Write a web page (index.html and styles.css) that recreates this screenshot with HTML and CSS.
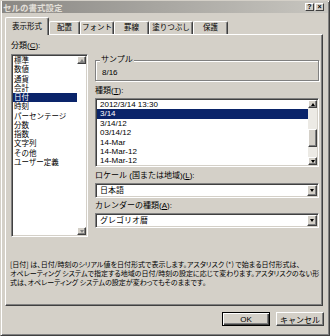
FILE: index.html
```html
<!DOCTYPE html>
<html lang="ja">

<head>
  <meta charset="UTF-8">
  <meta name="viewport" content="width=device-width, initial-scale=1.0">
  <title>セルの書式設定</title>
  <link rel="stylesheet" href="styles.css">
</head>

<body>
  <div class="window">
    <div class="titlebar">
      <span class="title">セルの書式設定</span>
      <div class="caption-buttons">
        <span class="caption-btn">?</span>
        <span class="caption-btn">×</span>
      </div>
    </div>

    <div class="tabs">
      <div class="tab active w1">表示形式</div>
      <div class="tab w2">配置</div>
      <div class="tab w3">フォント</div>
      <div class="tab w4">罫線</div>
      <div class="tab w5">塗りつぶし</div>
      <div class="tab w6">保護</div>
    </div>

    <div class="panel">
      <div class="cols">
        <div class="col-left">
          <div class="label">分類(<u>C</u>):</div>
          <div class="listbox category">
            <div class="items">
              <div class="item">標準</div>
              <div class="item">数値</div>
              <div class="item">通貨</div>
              <div class="item">会計</div>
              <div class="item selected">日付</div>
              <div class="item">時刻</div>
              <div class="item">パーセンテージ</div>
              <div class="item">分数</div>
              <div class="item">指数</div>
              <div class="item">文字列</div>
              <div class="item">その他</div>
              <div class="item">ユーザー定義</div>
            </div>
            <div class="vscroll flat">
              <span class="sbtn"><span class="arrow up disabled"></span></span>
              <span class="sbtn"><span class="arrow down disabled"></span></span>
            </div>
          </div>
        </div>

        <div class="col-right">
          <div class="group">
            <div class="group-title">サンプル</div>
            <div class="group-value">8/16</div>
          </div>

          <div class="label gap-5">種類(<u>T</u>):</div>
          <div class="listbox types">
            <div class="items">
              <div class="item">2012/3/14 13:30</div>
              <div class="item selected">3/14</div>
              <div class="item">3/14/12</div>
              <div class="item">03/14/12</div>
              <div class="item">14-Mar</div>
              <div class="item">14-Mar-12</div>
              <div class="item">14-Mar-12</div>
            </div>
            <div class="vscroll track">
              <span class="sbtn"><span class="arrow up"></span></span>
              <span class="thumb"></span>
              <span class="sbtn"><span class="arrow down"></span></span>
            </div>
          </div>

          <div class="label gap-4">ロケール (国または地域)(<u>L</u>):</div>
          <div class="combo">
            <span class="combo-value">日本語</span>
            <span class="sbtn combo-btn"><span class="arrow down"></span></span>
          </div>

          <div class="label gap-3">カレンダーの種類(<u>A</u>):</div>
          <div class="combo">
            <span class="combo-value">グレゴリオ暦</span>
            <span class="sbtn combo-btn"><span class="arrow down"></span></span>
          </div>
        </div>
      </div>

      <p class="desc">[日付] は、日付/時刻のシリアル値を日付形式で表示します。アスタリスク (*) で始まる日付形式は、<br>オペレーティング システムで指定する地域の日付/時刻の設定に応じて変わります。アスタリスクのない形<br>式は、オペレーティング システムの設定が変わってもそのままです。</p>
    </div>

    <div class="actions">
      <button class="btn default">OK</button>
      <button class="btn">キャンセル</button>
    </div>
  </div>
</body>

</html>
```

FILE: styles.css
```css
* {
  box-sizing: border-box;
}

body {
  margin: 0;
  background: #d4d0c8;
  font-family: "Liberation Sans", "Noto Sans CJK JP", sans-serif;
  font-size: 8px;
  color: #000;
}

.window {
  width: 330px;
  height: 336px;
  padding: 0 2px 2px 2px;
  border: 1px solid;
  border-color: #d4d0c8 #404040 #404040 #d4d0c8;
  box-shadow: inset 1px 1px #fff, inset -1px -1px #808080;
  background: #d4d0c8;
}

/* title bar */
.titlebar {
  height: 12px;
  margin: 0 -1px;
  padding: 0 4px 0 1px;
  display: flex;
  align-items: center;
  justify-content: space-between;
  background: linear-gradient(to right, #8a8884, #c8c6c0);
}

.title {
  color: #e2dfd8;
  font-family: "Noto Sans CJK JP", sans-serif;
  font-size: 8.5px;
  font-weight: bold;
  line-height: 10px;
}

.caption-buttons {
  display: flex;
  gap: 1px;
}

.caption-btn {
  width: 9px;
  height: 8px;
  display: flex;
  align-items: center;
  justify-content: center;
  background: #d4d0c8;
  border: 1px solid;
  border-color: #fff #404040 #404040 #fff;
  font-size: 7px;
  font-weight: bold;
  line-height: 6px;
}

/* tabs */
.tabs {
  display: flex;
  align-items: flex-start;
  height: 18px;
  margin: 4px 0 -1px 2px;
  position: relative;
  z-index: 1;
}

.tab {
  height: 13px;
  margin-top: 4px;
  border: 1px solid;
  border-bottom: none;
  border-color: #fff #404040 #404040 #fff;
  border-radius: 2px 2px 0 0;
  box-shadow: inset -1px 0 #808080;
  text-align: center;
  font-family: "Noto Sans CJK JP", sans-serif;
  font-size: 7.5px;
  line-height: 10px;
  white-space: nowrap;
}

.tab.active {
  height: 18px;
  margin-top: 0;
  padding-top: 3px;
  background: #d4d0c8;
}

.w1 { width: 44px; }
.w2 { width: 31px; }
.w3 { width: 34px; }
.w4 { width: 35px; }
.w5 { width: 44px; }
.w6 { width: 35px; }

/* panel */
.panel {
  width: 318px;
  height: 272px;
  margin-left: 2px;
  border: 1px solid;
  border-color: #fff #404040 #404040 #fff;
  box-shadow: inset -1px -1px #808080;
}

.cols {
  display: grid;
  grid-template-columns: 77px 224px;
  column-gap: 7px;
  padding: 6px 0 0 5px;
}

.label {
  height: 10px;
  line-height: 10px;
  white-space: nowrap;
}

.gap-3 { margin-top: 3px; }
.gap-4 { margin-top: 4px; }
.gap-5 { margin-top: 5px; }

/* sunken list boxes */
.listbox {
  display: flex;
  padding: 1px;
  background: #fff;
  border: 1px solid;
  border-color: #808080 #fff #fff #808080;
  box-shadow: inset 1px 1px #404040, inset -1px -1px #d4d0c8;
  overflow: hidden;
}

.items {
  flex: 1;
  overflow: hidden;
}

.item {
  white-space: nowrap;
}

.item.selected {
  background: #0a246a;
  color: #fff;
}

.category {
  height: 183px;
  margin-top: 3px;
}

.category .item {
  height: 9.25px;
  line-height: 9.25px;
  padding-left: 1px;
  font-size: 7.5px;
}

.types {
  height: 69px;
  margin-top: 2px;
}

.types .item {
  height: 9.4px;
  line-height: 9.4px;
  padding-left: 3px;
}

.vscroll {
  width: 9px;
  display: flex;
  flex-direction: column;
  justify-content: space-between;
}

.vscroll.track {
  background: #eceae5;
}

.sbtn {
  width: 9px;
  height: 8px;
  display: flex;
  align-items: center;
  justify-content: center;
  background: #d4d0c8;
  border: 1px solid;
  border-color: #fff #404040 #404040 #fff;
  box-shadow: inset -1px -1px #808080;
}

.thumb {
  width: 9px;
  height: 18px;
  margin-top: 21px;
  margin-bottom: auto;
  background: #d4d0c8;
  border: 1px solid;
  border-color: #fff #404040 #404040 #fff;
  box-shadow: inset -1px -1px #808080;
}

.arrow {
  width: 0;
  height: 0;
  border-left: 2.5px solid transparent;
  border-right: 2.5px solid transparent;
}

.arrow.up {
  border-bottom: 3px solid #000;
}

.arrow.down {
  border-top: 3px solid #000;
}

.arrow.up.disabled {
  border-bottom-color: #808080;
}

.arrow.down.disabled {
  border-top-color: #808080;
}

/* sample group box */
.group {
  height: 21px;
  margin-top: 19px;
  border: 1px solid #808080;
  box-shadow: inset 1px 1px #fff, 1px 1px #fff;
}

.group-title {
  width: max-content;
  margin: -6px 0 0 4px;
  padding: 0 1px;
  background: #d4d0c8;
  line-height: 10px;
}

.group-value {
  margin-top: 3px;
  padding-left: 6px;
  line-height: 10px;
}

/* combo boxes */
.combo {
  display: flex;
  height: 15px;
  margin-top: 2px;
  padding: 1px;
  background: #fff;
  border: 1px solid;
  border-color: #808080 #fff #fff #808080;
  box-shadow: inset 1px 1px #404040, inset -1px -1px #d4d0c8;
}

.combo-value {
  flex: 1;
  padding-left: 3px;
  line-height: 11px;
}

.combo-btn {
  width: 10px;
  height: 11px;
}

/* description */
.desc {
  margin: 23px 0 0 4px;
  font-family: "Noto Sans CJK JP", sans-serif;
  font-size: 7px;
  line-height: 9px;
  white-space: nowrap;
  font-feature-settings: "palt";
}

/* dialog buttons */
.actions {
  display: flex;
  justify-content: flex-end;
  gap: 6px;
  margin-top: 6px;
  padding-right: 3px;
}

.btn {
  width: 48px;
  height: 14px;
  padding: 0;
  font: inherit;
  color: #000;
  background: #d4d0c8;
  border: 1px solid;
  border-color: #fff #404040 #404040 #fff;
  box-shadow: inset -1px -1px #808080;
}

.btn.default {
  border-color: #000;
  box-shadow: inset 1px 1px #fff, inset -1px -1px #404040, inset -2px -2px #808080;
}
```
